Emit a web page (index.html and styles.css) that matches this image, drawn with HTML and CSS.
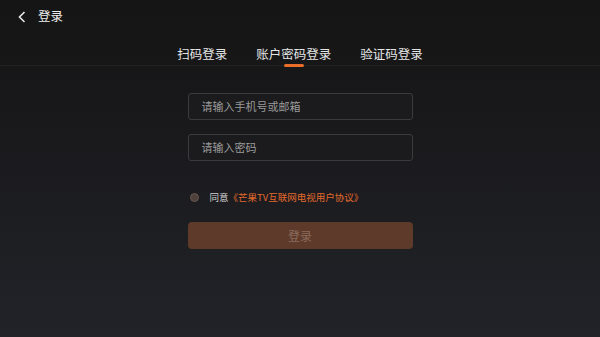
FILE: index.html
```html
<!DOCTYPE html>
<html>
<head>
<meta charset="utf-8">
<title>登录</title>
<link rel="stylesheet" href="styles.css">
</head>
<body>
<div class="page">
  <header class="topbar">
    <svg class="back" width="8" height="12" viewBox="0 0 8 12"><path d="M6.5 1 L1.5 6 L6.5 11" fill="none" stroke="#e8e8e8" stroke-width="1.6"/></svg>
    <span class="title">登录</span>
  </header>
  <nav class="tabs">
    <span class="tab">扫码登录</span>
    <span class="tab active">账户密码登录</span>
    <span class="tab">验证码登录</span>
  </nav>
  <form class="login">
    <div class="field">请输入手机号或邮箱</div>
    <div class="field">请输入密码</div>
    <div class="agree">
      <span class="radio"></span>
      <span class="agree-text">同意</span>
      <span class="agree-link">《芒果TV互联网电视用户协议》</span>
    </div>
    <div class="submit">登录</div>
  </form>
</div>
</body>
</html>
```

FILE: styles.css
```css
html, body { margin: 0; padding: 0; }
body { width: 600px; height: 337px; overflow: hidden; font-family: "Noto Sans CJK SC", "Noto Sans", sans-serif; background: #1a1a1c; }
.page { height: 337px; background: linear-gradient(to bottom, #151515 0%, #18181a 30%, #222329 100%); }

.topbar { height: 34px; display: flex; align-items: center; padding-left: 18px; }
.topbar .back { margin-right: 12px; margin-top: -1px; }
.topbar .title { color: #eeeeee; font-size: 12.5px; line-height: 14px; margin-top: -3px; }

.tabs { height: 32px; display: flex; justify-content: center; gap: 29px; border-bottom: 1px solid #212121; box-sizing: border-box; }
.tab { position: relative; color: #e6e6e6; font-size: 12.5px; line-height: 14px; padding-top: 13px; }
.tab.active::after { content: ""; position: absolute; left: 50%; top: 30px; width: 20px; height: 3px; margin-left: -10px; border-radius: 2px; background: #ea6e2a; }

.login { width: 225px; margin: 27px auto 0; }
.field { height: 27px; box-sizing: border-box; border: 1px solid #3b3b3d; border-radius: 3px; padding-left: 13px; color: #9a9a9a; font-size: 11px; line-height: 25px; margin-bottom: 14px; background: #1b1b1d; }
.agree { display: flex; align-items: center; margin-top: 28px; height: 16px; font-size: 9.5px; }
.radio { width: 9px; height: 9px; border-radius: 50%; background: #4f403c; border: 1px solid #675550; box-sizing: border-box; margin-left: 2px; margin-right: 11px; }
.agree-text { color: #cfcfcf; }
.agree-link { color: #e2692b; }
.submit { margin-top: 17px; height: 27px; border-radius: 4px; background: #5d3a29; color: #8b6b5c; font-size: 12px; line-height: 27px; text-align: center; }
```
